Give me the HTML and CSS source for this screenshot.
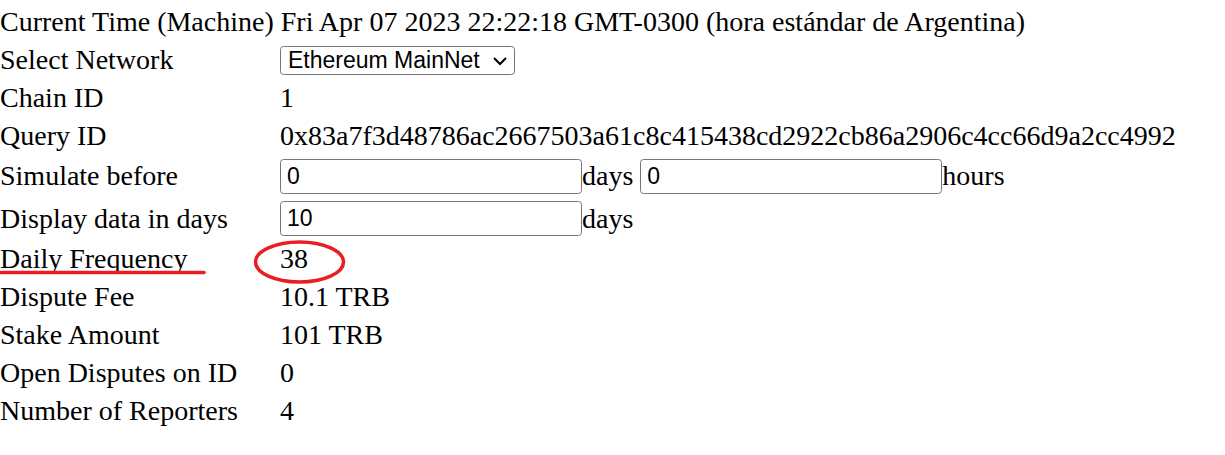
FILE: index.html
```html
<!DOCTYPE html>
<html>
<head>
<meta charset="utf-8">
<link rel="stylesheet" href="styles.css">
</head>
<body>
<div class="page">
  <div class="row">Current Time (Machine) Fri Apr 07 2023 22:22:18 GMT-0300 (hora estándar de Argentina)</div>
  <div class="row">
    <div class="label">Select Network</div>
    <div class="value">
      <span class="select-wrap">
        <select class="net">
          <option>Ethereum MainNet</option>
          <option>Goerli</option>
          <option>Polygon</option>
        </select>
        <svg class="chev" width="16" height="10" viewBox="0 0 16 10"><path d="M2 2 L8 8 L14 2" fill="none" stroke="#000" stroke-width="2"/></svg>
      </span>
    </div>
  </div>
  <div class="row"><div class="label">Chain ID</div><div class="value">1</div></div>
  <div class="row"><div class="label">Query ID</div><div class="value">0x83a7f3d48786ac2667503a61c8c415438cd2922cb86a2906c4cc66d9a2cc4992</div></div>
  <div class="row row-input">
    <div class="label">Simulate before</div>
    <div class="value"><input class="field" type="text" value="0">days <input class="field" type="text" value="0">hours</div>
  </div>
  <div class="row row-input row-input2">
    <div class="label">Display data in days</div>
    <div class="value"><input class="field" type="text" value="10">days</div>
  </div>
  <div class="row"><div class="label">Daily Frequency</div><div class="value">38</div></div>
  <div class="row"><div class="label">Dispute Fee</div><div class="value">10.1 TRB</div></div>
  <div class="row"><div class="label">Stake Amount</div><div class="value">101 TRB</div></div>
  <div class="row"><div class="label">Open Disputes on ID</div><div class="value">0</div></div>
  <div class="row"><div class="label">Number of Reporters</div><div class="value">4</div></div>

  <svg class="marks" width="1225" height="455" viewBox="0 0 1225 455">
    <line x1="1" y1="272.5" x2="204" y2="272.5" stroke="#ea1c24" stroke-width="3.5" stroke-linecap="round"/>
    <ellipse cx="299.5" cy="262" rx="44" ry="20" fill="none" stroke="#ea1c24" stroke-width="3.5"/>
  </svg>
</div>
</body>
</html>
```
FILE: styles.css
```css
html, body {
  margin: 0;
  padding: 0;
  background: #ffffff;
}

.page {
  position: relative;
  padding-top: 3px;
  font-family: "Liberation Serif", "Times New Roman", serif;
  font-size: 28px;
  color: #000000;
  width: 1225px;
  height: 452px;
  overflow: hidden;
}

.row {
  display: flex;
  align-items: center;
  height: 38px;
  line-height: 38px;
  white-space: nowrap;
}

.row-input {
  height: 42px;
}

.row-input2 {
  height: 43px;
}

.label {
  width: 280px;
  flex: none;
}

.value {
  display: flex;
  align-items: center;
  white-space: pre;
}

.select-wrap {
  position: relative;
  display: inline-flex;
}

.net {
  -webkit-appearance: none;
  appearance: none;
  width: 235px;
  height: 29px;
  font-family: "Liberation Sans", Arial, sans-serif;
  font-size: 23px;
  line-height: 27px;
  color: #000000;
  background: #ffffff;
  border: 1px solid #767676;
  border-radius: 3.5px;
  padding: 0 0 0 7px;
  margin: 0;
}

.chev {
  position: absolute;
  right: 7px;
  top: 10px;
  pointer-events: none;
}

.field {
  box-sizing: border-box;
  width: 302px;
  height: 35px;
  font-family: "Liberation Sans", Arial, sans-serif;
  font-size: 23px;
  color: #000000;
  background: #ffffff;
  border: 1px solid #767676;
  border-radius: 3.5px;
  padding: 0 6px;
  margin: 0;
}

.marks {
  position: absolute;
  left: 0;
  top: 0;
  pointer-events: none;
}
```
